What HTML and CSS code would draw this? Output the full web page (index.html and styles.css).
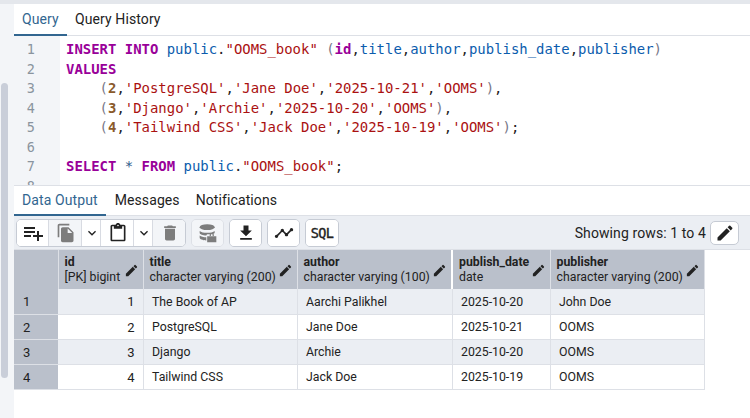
FILE: index.html
```html
<!DOCTYPE html>
<html lang="en">
<head>
<meta charset="utf-8">
<title>Query Tool</title>
<link rel="stylesheet" href="styles.css">
</head>
<body>
<div class="topstrip"></div>
<div class="app">
  <aside class="side"><div class="thumb"></div></aside>
  <main class="main">
    <nav class="tabs">
      <div class="tab active">Query</div>
      <div class="tab">Query History</div>
    </nav>
    <section class="editor">
      <div class="gutter"><div>1</div><div>2</div><div>3</div><div>4</div><div>5</div><div>6</div><div>7</div><div>8</div></div>
<pre class="code"><span class="k">INSERT INTO</span> <span class="v">public</span>.<span class="s">"OOMS_book"</span> <span class="p">(</span><span class="kb">id</span><span class="d">,</span><span class="v">title</span><span class="d">,</span><span class="v">author</span><span class="d">,</span><span class="v">publish_date</span><span class="d">,</span><span class="v">publisher</span><span class="p">)</span>
<span class="k">VALUES</span>
    <span class="p">(</span><span class="n">2</span><span class="d">,</span><span class="s">'PostgreSQL'</span><span class="d">,</span><span class="s">'Jane Doe'</span><span class="d">,</span><span class="s">'2025-10-21'</span><span class="d">,</span><span class="s">'OOMS'</span><span class="p">)</span><span class="d">,</span>
    <span class="p">(</span><span class="n">3</span><span class="d">,</span><span class="s">'Django'</span><span class="d">,</span><span class="s">'Archie'</span><span class="d">,</span><span class="s">'2025-10-20'</span><span class="d">,</span><span class="s">'OOMS'</span><span class="p">)</span><span class="d">,</span>
    <span class="p">(</span><span class="n">4</span><span class="d">,</span><span class="s">'Tailwind CSS'</span><span class="d">,</span><span class="s">'Jack Doe'</span><span class="d">,</span><span class="s">'2025-10-19'</span><span class="d">,</span><span class="s">'OOMS'</span><span class="p">)</span><span class="d">;</span>

<span class="k">SELECT</span> <span class="o">*</span> <span class="k">FROM</span> <span class="v">public</span>.<span class="s">"OOMS_book"</span><span class="d">;</span></pre>
    </section>
    <nav class="tabs tabs-lower">
      <div class="tab active">Data Output</div>
      <div class="tab">Messages</div>
      <div class="tab">Notifications</div>
    </nav>
    <div class="toolbar">
      <div class="btn-group multi">
        <button class="btn add"><svg viewBox="0 0 24 24"><path d="M14 10H3v2h11v-2zm0-4H3v2h11V6zm4 8v-4h-2v4h-4v2h4v4h2v-4h4v-2h-4zM3 16h7v-2H3v2z"/></svg></button>
        <button class="btn off"><svg viewBox="0 0 24 24"><path d="M16 1H4c-1.1 0-2 .9-2 2v14h2V3h12V1zm-1 4l6 6v10c0 1.1-.9 2-2 2H7.99C6.89 23 6 22.1 6 21l.01-14c0-1.1.89-2 1.99-2h7zm-1 7h5.5L14 6.5V12z"/></svg></button>
        <button class="btn caret"><svg viewBox="0 0 24 24"><path d="M7.41 8.59L12 13.17l4.59-4.58L18 10l-6 6-6-6 1.41-1.41z"/></svg></button>
        <button class="btn"><svg viewBox="0 0 24 24"><path d="M19 2h-4.18C14.4.84 13.3 0 12 0c-1.3 0-2.4.84-2.82 2H5c-1.1 0-2 .9-2 2v16c0 1.1.9 2 2 2h14c1.1 0 2-.9 2-2V4c0-1.1-.9-2-2-2zm-7 0c.55 0 1 .45 1 1s-.45 1-1 1-1-.45-1-1 .45-1 1-1zm7 18H5V4h2v3h10V4h2v16z"/></svg></button>
        <button class="btn caret"><svg viewBox="0 0 24 24"><path d="M7.41 8.59L12 13.17l4.59-4.58L18 10l-6 6-6-6 1.41-1.41z"/></svg></button>
        <button class="btn off"><svg viewBox="0 0 24 24"><path d="M6 19c0 1.1.9 2 2 2h8c1.1 0 2-.9 2-2V7H6v12zM19 4h-3.5l-1-1h-5l-1 1H5v2h14V4z"/></svg></button>
      </div>
      <div class="btn-group single muted"><button class="btn off"><svg viewBox="0 0 24 24"><ellipse cx="11" cy="5" rx="9" ry="3.500"/><path d="M2 9.500c1.600 1.500 5.200 2.300 9 2.300s7.400-.8 9-2.300V12c-.6.700-1.500 1.200-2.600 1.600H12c-1 0-1.800.6-2 1.500-4.200-.2-8-1.500-8-3zM2 15c1.700 1.300 4.600 2 8 2.200V21c-4.500-.2-8-1.500-8-3.200zM11 16h11v7H11zM14 15.500V14a2.500 2.500 0 0 1 5 0v1.500h-1.500V14a1 1 0 0 0-2 0v1.500z"/></svg></button></div>
      <div class="btn-group single"><button class="btn"><svg viewBox="0 0 24 24"><path d="M19 9h-4V3H9v6H5l7 7 7-7zM5 18v2h14v-2H5z"/></svg></button></div>
      <div class="btn-group single"><button class="btn"><svg viewBox="0 0 24 24"><path d="M23 8c0 1.100-.9 2-2 2-.18 0-.35-.02-.51-.07l-3.560 3.550c.05.16.07.34.07.52 0 1.100-.9 2-2 2s-2-.9-2-2c0-.18.02-.36.07-.52l-2.550-2.550c-.16.05-.34.07-.52.07s-.36-.02-.52-.07l-4.550 4.560c.05.16.07.33.07.51 0 1.100-.9 2-2 2s-2-.9-2-2 .9-2 2-2c.18 0 .35.02.51.07l4.560-4.550C8.020 9.360 8 9.180 8 9c0-1.100.9-2 2-2s2 .9 2 2c0 .18-.02.36-.07.52l2.550 2.550c.16-.05.34-.07.52-.07s.36.02.52.07l3.550-3.560C19.020 8.350 19 8.180 19 8c0-1.100.9-2 2-2s2 .9 2 2z"/></svg></button></div>
      <div class="btn-group single"><button class="btn sql">SQL</button></div>
      <div class="rows-info">Showing rows: 1 to 4</div>
      <button class="btn pencil"><svg viewBox="0 0 24 24"><path d="M3 17.250V21h3.750L17.810 9.940l-3.750-3.750L3 17.250zM20.710 7.040c.39-.39.39-1.020 0-1.410l-2.340-2.340a.996.996 0 0 0-1.410 0l-1.830 1.830 3.750 3.750 1.830-1.830z"/></svg></button>
    </div>
    <table class="grid">
      <colgroup><col class="c0"><col class="c1"><col class="c2"><col class="c3"><col class="c4"><col class="c5"></colgroup>
      <thead>
        <tr>
          <th></th>
          <th><div class="hd"><div><b>id</b><span>[PK] bigint</span></div><svg viewBox="0 0 24 24"><path d="M3 17.250V21h3.750L17.810 9.940l-3.750-3.750L3 17.250zM20.710 7.040c.39-.39.39-1.020 0-1.410l-2.340-2.340a.996.996 0 0 0-1.410 0l-1.830 1.830 3.750 3.750 1.830-1.830z"/></svg></div></th>
          <th><div class="hd"><div><b>title</b><span>character varying (200)</span></div><svg viewBox="0 0 24 24"><path d="M3 17.250V21h3.750L17.810 9.940l-3.750-3.750L3 17.250zM20.710 7.040c.39-.39.39-1.020 0-1.410l-2.340-2.340a.996.996 0 0 0-1.410 0l-1.830 1.830 3.750 3.750 1.830-1.830z"/></svg></div></th>
          <th class="resize"><div class="hd"><div><b>author</b><span>character varying (100)</span></div><svg viewBox="0 0 24 24"><path d="M3 17.250V21h3.750L17.810 9.940l-3.750-3.750L3 17.250zM20.710 7.040c.39-.39.39-1.020 0-1.410l-2.340-2.340a.996.996 0 0 0-1.410 0l-1.830 1.830 3.750 3.750 1.830-1.830z"/></svg></div></th>
          <th><div class="hd"><div><b>publish_date</b><span>date</span></div><svg viewBox="0 0 24 24"><path d="M3 17.250V21h3.750L17.810 9.940l-3.750-3.750L3 17.250zM20.710 7.040c.39-.39.39-1.020 0-1.410l-2.340-2.340a.996.996 0 0 0-1.410 0l-1.830 1.830 3.750 3.750 1.830-1.830z"/></svg></div></th>
          <th><div class="hd"><div><b>publisher</b><span>character varying (200)</span></div><svg viewBox="0 0 24 24"><path d="M3 17.250V21h3.750L17.810 9.940l-3.750-3.750L3 17.250zM20.710 7.040c.39-.39.39-1.020 0-1.410l-2.340-2.340a.996.996 0 0 0-1.410 0l-1.830 1.830 3.750 3.750 1.830-1.830z"/></svg></div></th>
        </tr>
      </thead>
      <tbody>
        <tr class="alt"><th>1</th><td class="num">1</td><td>The Book of AP</td><td>Aarchi Palikhel</td><td>2025-10-20</td><td>John Doe</td></tr>
        <tr><th>2</th><td class="num">2</td><td>PostgreSQL</td><td>Jane Doe</td><td>2025-10-21</td><td>OOMS</td></tr>
        <tr class="alt"><th>3</th><td class="num">3</td><td>Django</td><td>Archie</td><td>2025-10-20</td><td>OOMS</td></tr>
        <tr><th>4</th><td class="num">4</td><td>Tailwind CSS</td><td>Jack Doe</td><td>2025-10-19</td><td>OOMS</td></tr>
      </tbody>
    </table>
  </main>
</div>
</body>
</html>
```

FILE: styles.css
```css
* { box-sizing: border-box; }
html, body { margin: 0; height: 418px; overflow: hidden; background: #fff; }
body { font-family: Roboto, "Liberation Sans", sans-serif; font-size: 14px; color: #222; }
.topstrip { height: 4px; background: #e4e7ec; }
.app { display: flex; height: 414px; }
.side { width: 14px; flex: none; background: #f3f5f8; padding: 79px 6px 0 1px; }
.thumb { height: 295px; background: #c9ced9; border-radius: 4px; }
.main { flex: 1; min-width: 0; display: flex; flex-direction: column; }
.tabs { display: flex; height: 32px; border-bottom: 1px solid #dde0e6; flex: none; }
.tabs-lower { height: 31px; border-top: 1px solid #dde0e6; }
.tab { padding: 7px 8px 0; font-size: 14px; line-height: 16px; color: #222; margin-bottom: -1px; letter-spacing: .1px; }
.tab.active { color: #326690; border-bottom: 2px solid #326690; }
.tabs .tab:first-child { min-width: 53px; }
.tabs-lower .tab { padding-top: 6px; }
.tabs-lower .active + .tab { margin-left: 1px; }
.editor { display: flex; height: 149px; overflow: hidden; flex: none; background: #fff; }
.gutter { width: 46px; background: #f3f5f8; padding: 4px 25px 0 0; text-align: right; color: #8a949e; font: 13.500px/19.500px "DejaVu Sans Mono", monospace; flex: none; }
.gutter div { height: 19.500px; }
.code { margin: 0; padding: 4px 0 0 6px; font: 13.950px/19.500px "DejaVu Sans Mono", "Liberation Mono", monospace; color: #222; }
.k { color: #990099; font-weight: 700; }
.kb { color: #990099; font-weight: 700; }
.v { color: #0b5cad; }
.s { color: #aa1111; }
.n { color: #8a5a2b; font-weight: 700; }
.p { color: #778; }
.d { color: #222; }
.o { color: #2c5b8a; }
.toolbar { display: flex; align-items: center; height: 34px; flex: none; padding: 0 11px 0 2px; gap: 5px; background: #ebeef3; border-bottom: 1px solid #dde0e6; }
.btn-group { display: flex; height: 28px; background: #fff; border: 1px solid #c6cbd4; border-radius: 5px; overflow: hidden; }
.btn { display: flex; align-items: center; justify-content: center; width: 33px; height: 100%; padding: 0; border: 0; border-right: 1px solid #d8dbe2; background: #fff; color: #222; }
.btn:last-child { border-right: 0; }
.btn svg { width: 20px; height: 20px; fill: currentColor; }
.btn.add svg { width: 24px; height: 24px; }
.multi .btn:first-child, .multi .btn:last-child { width: 32px; }
.multi .btn:not(.add) svg { margin-left: 1px; }
.btn.caret { width: 19px; }
.btn.caret svg { width: 18px; height: 18px; }
.multi .btn.caret svg { margin-left: 2px; }
.btn.off { background: #f3f5f8; color: #7d7d7d; }
.single .btn { width: 31px; }
.muted { background: #f3f5f8; border-color: #dde0e6; }
.single .sql { width: 32px; font: 400 13.500px "DejaVu Sans Mono", monospace; letter-spacing: -.7px; -webkit-text-stroke: .4px #222; }
.rows-info { margin-left: auto; font-size: 14px; letter-spacing: .1px; }
.pencil { width: 29px; height: 24px; border: 1px solid #c6cbd4; border-radius: 5px; margin-left: -1px; }
.pencil:last-child { border-right: 1px solid #c6cbd4; }
.grid { border-collapse: collapse; table-layout: fixed; width: 690px; font-size: 12.300px; }
.c0 { width: 44px; } .c1 { width: 85px; } .c2 { width: 154px; } .c3 { width: 155px; } .c4 { width: 98px; } .c5 { width: 154px; }
.grid thead th { height: 39px; padding: 1px 6px 0 6px; background: #bac0cb; border-right: 1px solid #dde0e6; text-align: left; font-weight: 400; }
.grid thead th.resize { border-right: 2px solid #fff; }
.hd { display: flex; align-items: center; justify-content: space-between; line-height: 15.500px; white-space: nowrap; }
.hd b, .hd span { display: block; }
.hd b { font-weight: 700; }
.hd svg { width: 15px; height: 15px; fill: #222; flex: none; margin-right: -2px; }
.grid tbody th { background: #bac0cb; font-weight: 400; font-size: 13px; text-align: left; padding: 1px 6px 0 9px; border-bottom: 1px solid #dde0e6; }
.grid td { height: 25px; padding: 1px 6px 0 8.500px; border-right: 1px solid #dde0e6; border-bottom: 1px solid #dde0e6; white-space: nowrap; background: #fff; }
.grid .alt td { background: #ebeef3; }
.grid td.num { text-align: right; padding-right: 8px; font-size: 13px; }
```
